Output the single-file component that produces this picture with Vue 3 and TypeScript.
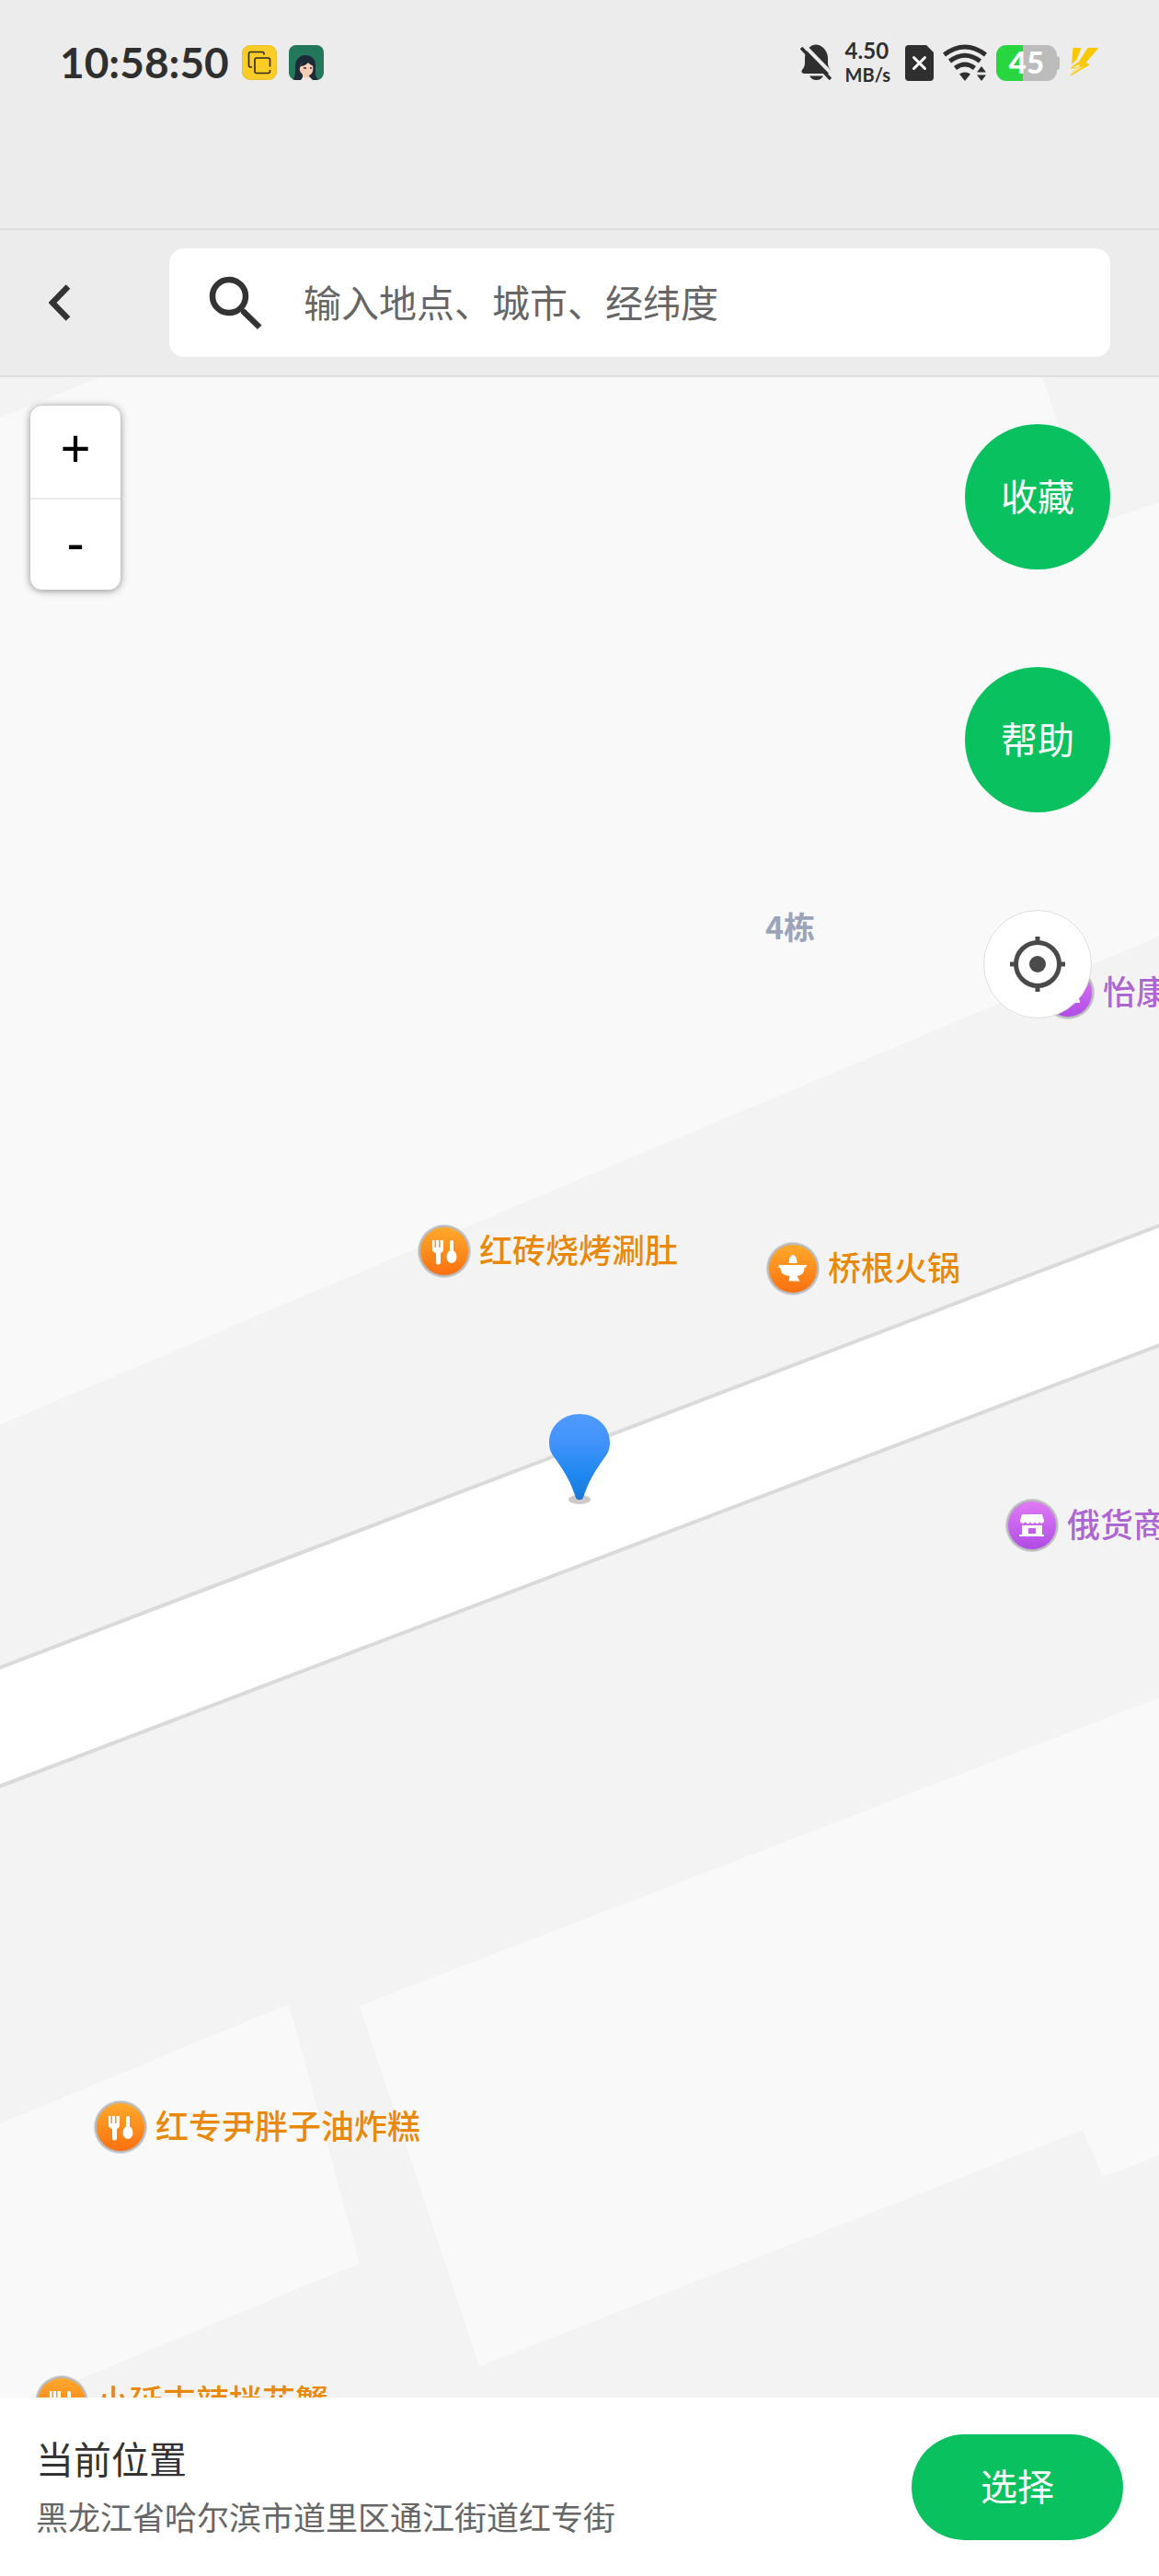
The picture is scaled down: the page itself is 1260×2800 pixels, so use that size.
<script setup lang="ts">
import { ref } from 'vue'

type PoiKind = 'food' | 'hotpot' | 'shop' | 'person'

interface Poi {
  name: string
  kind: PoiKind
  x: number
  y: number
}

// Size of the map tile area that the marker positions are measured in
const MAP_WIDTH = 1260
const MAP_HEIGHT = 2197

const pois: Poi[] = [
  { name: '怡康', kind: 'person', x: 1161, y: 669 },
  { name: '红砖烧烤涮肚', kind: 'food', x: 483, y: 950 },
  { name: '桥根火锅', kind: 'hotpot', x: 862, y: 969 },
  { name: '俄货商', kind: 'shop', x: 1122, y: 1249 },
  { name: '红专尹胖子油炸糕', kind: 'food', x: 131, y: 1903 },
  { name: '小延吉辣拌花蟹', kind: 'food', x: 67, y: 2202 },
]

const keyword = ref('')

function place(x: number, y: number) {
  return {
    left: `${(x / MAP_WIDTH) * 100}%`,
    top: `${(y / MAP_HEIGHT) * 100}%`,
  }
}

function isPurple(kind: PoiKind) {
  return kind === 'shop' || kind === 'person'
}
</script>

<template>
  <div class="screen">
    <div class="status">
      <div class="status-left">
        <span class="clock">10:58:50</span>
        <svg class="app-icon" viewBox="0 0 38 38" width="38" height="38">
          <rect x="0.5" y="0.5" width="37" height="37" rx="8" fill="#fbcb26" stroke="#e9bf3c" />
          <g fill="none" stroke="#2c2a1c" stroke-width="1.6" stroke-linecap="round">
            <path d="M24 10V9.500a2 2 0 0 0-2-2H9.500a2 2 0 0 0-2 2V22a2 2 0 0 0 2 2h1" />
            <path d="M30.500 23V16a2 2 0 0 0-2-2H16a2 2 0 0 0-2 2v12.500a2 2 0 0 0 2 2h12.500a2 2 0 0 0 2-2V27.500" />
          </g>
        </svg>
        <svg class="app-icon" viewBox="0 0 38 38" width="38" height="38">
          <defs>
            <clipPath id="avatar-clip"><rect width="38" height="38" rx="8" /></clipPath>
          </defs>
          <g clip-path="url(#avatar-clip)">
            <rect width="38" height="38" fill="#23775a" />
            <path d="M4 38c3-3 3-7 3-14C7 15 12 11 18 11c7 0 11 4 11 11 0 6-1 11 3 16z" fill="#1d2b38" />
            <path d="M12 24c0-4 3-5 6-6 3 0 7 2 8 4 1 5 0 9-4 11l-1 5h-6v-6c-2-2-4-4-3-8z" fill="#f6cdb2" />
            <path d="M11 26c1-6 5-9 10-9 4 0 6 3 6 6-3-1-5-3-6-4-3 3-6 4-8 4z" fill="#1d2b38" />
            <path d="M13 38l2-3c2 1 5 1 7-1l4 4z" fill="#f2e9e4" />
            <path d="M16 25h3M23 25h2" stroke="#3a2a28" stroke-width="1.3" />
          </g>
        </svg>
      </div>

      <div class="status-right">
        <svg viewBox="0 0 34 40" width="34" height="40">
          <path d="M6 32c-5 0-5-2-4-4 2-2 3-5 3-8v-6C6 6 11 0.500 17 0.500S29 6 30 14v6c0 3 1 6 3 8 1 2 1 4-4 4z" fill="#2f2f2f" />
          <path d="M10 34.500h15c-2 3-4 4.500-7.500 4.500S12 37.500 10 34.500z" fill="#2f2f2f" />
          <path d="M3 0l33 34" stroke="#ececec" stroke-width="4" />
          <path d="M1 4l32 34" stroke="#2f2f2f" stroke-width="3.600" />
        </svg>
        <span class="rate">
          <span class="rate-value">4.50</span>
          <span class="rate-unit">MB/s</span>
        </span>
        <svg class="sim" viewBox="0 0 31 39" width="31" height="39">
          <path d="M4 0h19l8 8v27a4 4 0 0 1-4 4H4a4 4 0 0 1-4-4V4a4 4 0 0 1 4-4z" fill="#2f2f2f" />
          <path d="M9.500 13.500l12 12M21.500 13.500l-12 12" stroke="#fff" stroke-width="3" stroke-linecap="round" />
        </svg>
        <svg class="wifi" viewBox="0 0 48 40" width="48" height="40">
          <g fill="none" stroke="#2f2f2f" stroke-width="5">
            <path d="M1.500 11.500Q24-5.500 46.500 11.500" />
            <path d="M7.500 18.500Q24 6 40.500 18.500" />
            <path d="M13.500 26Q24 18 34.500 26" />
          </g>
          <path d="M18 32.500q6-4 12 0l-6 7.500z" fill="#2f2f2f" />
          <path d="M42 24l5 6.500H37zM42 40l5-6.500H37z" fill="#2f2f2f" />
        </svg>
        <span class="battery">45</span>
        <svg class="bolt" viewBox="0 0 33 32" width="33" height="32">
          <path d="M4.500 0h9L8.500 13 3 18z" fill="#fac800" />
          <path d="M20.500 0h12L18.500 16l4 2.500L1 31l6.500-9.500L2 23l1.500-3L11 15z" fill="#fac800" />
          <path d="M3 21l10-3.500-2.500 4L16 20 2.500 29l5.500-8z" fill="#f7e49a" />
        </svg>
      </div>
    </div>

    <header class="header">
      <button class="back" type="button" aria-label="返回">
        <svg viewBox="0 0 24 40" width="24" height="40">
          <path d="M21 2.500L4 20l17 17.500" fill="none" stroke="#333" stroke-width="6.500" />
        </svg>
      </button>
      <label class="search">
        <svg viewBox="0 0 58 58" width="58" height="58">
          <circle cx="22" cy="22" r="18" fill="none" stroke="#333" stroke-width="6.500" />
          <path d="M36 37l3-1 18 17.500-4 4L35 40z" fill="#333" stroke="#333" stroke-width="1" />
        </svg>
        <input v-model="keyword" type="text" placeholder="输入地点、城市、经纬度" aria-label="搜索" />
      </label>
    </header>

    <main class="map">
      <svg class="tiles" viewBox="0 410 1260 2197" preserveAspectRatio="none">
        <g fill="#f9f9f9">
          <path d="M0 454L108 410H1133L1187 571 1260 546V1018L633 1281 0 1549z" />
          <path d="M0 2309L314 2179 391 2461 0 2623z" />
          <path d="M391 2181L1260 1846V2344L1199 2367 1177 2316 521 2573z" />
        </g>
        <path d="M-10 1817L1270 1329V1459L-10 1946z" fill="#fff" stroke="#dadada" stroke-width="4" />
      </svg>

      <span class="building" :style="place(859, 597)">4栋</span>

      <div
        v-for="poi in pois"
        :key="poi.name"
        class="poi"
        :class="{ purple: isPurple(poi.kind) }"
        :style="place(poi.x, poi.y)"
      >
        <svg viewBox="0 0 58 58" width="58" height="58">
          <defs>
            <linearGradient id="poi-orange" x1="0" y1="0" x2="0" y2="1">
              <stop offset="0" stop-color="#ffaa2b" />
              <stop offset="1" stop-color="#fb700f" />
            </linearGradient>
            <linearGradient id="poi-purple" x1="0" y1="0" x2="0" y2="1">
              <stop offset="0" stop-color="#e07af5" />
              <stop offset="1" stop-color="#b04ce6" />
            </linearGradient>
          </defs>
          <circle cx="29" cy="29" r="29" fill="#d3d4d6" />
          <circle cx="29" cy="29" r="28" fill="#b9b9bb" />
          <circle cx="29" cy="29" r="26" :fill="isPurple(poi.kind) ? 'url(#poi-purple)' : 'url(#poi-orange)'" />
          <g v-if="poi.kind === 'food'" fill="#fff">
            <path d="M16 17h2.500v8h1.500v-8h3v8h1.500v-8H28v9c0 3-1 4-3 5v10a2 2 0 0 1-5 0V31c-3-1-4-2-4-5z" />
            <rect x="35" y="17" width="4" height="14" rx="2" />
            <ellipse cx="37" cy="35" rx="5.500" ry="7" />
          </g>
          <g v-else-if="poi.kind === 'hotpot'" fill="#fff">
            <path d="M24.500 23c0-5 2-9 4.500-9s4.500 4 4.500 9z" />
            <path d="M13.500 25h31l-2 3h-1c0 6-3 8-8 9l3 5.500h-12l1-5.500c-7-1-10-3-10-9h-2z" />
          </g>
          <g v-else-if="poi.kind === 'shop'" fill="#fff">
            <path d="M18 17h22l2 7c0 3-4 4-5 1-1 3-4 3-5 0-1 3-4 3-5 0-1 3-4 3-5 0-2 3-6 2-6-1z" />
            <path d="M18 29h22v10h2v2H15v-2h3zM25 32v6h8v-6z" fill-rule="evenodd" />
          </g>
          <g v-else fill="#fff">
            <circle cx="29" cy="23" r="6" />
            <path d="M16 40c0-7 6-9 13-9s13 2 13 9z" />
          </g>
        </svg>
        <span>{{ poi.name }}</span>
      </div>

      <svg class="pin" :style="place(630, 1177)" viewBox="0 0 66 98" width="66" height="98">
        <defs>
          <linearGradient id="pin-fill" x1="0" y1="0" x2="0" y2="1">
            <stop offset="0" stop-color="#4f9aff" />
            <stop offset="0.300" stop-color="#4394fb" />
            <stop offset="0.700" stop-color="#1f88f0" />
            <stop offset="1" stop-color="#1a78d8" />
          </linearGradient>
        </defs>
        <ellipse cx="33" cy="93" rx="12" ry="5" fill="#cfc8c8" />
        <path d="M33 0C51 0 66 13 66 31c0 8-3 13-7 18-10 14-17 26-22 42-1 3-7 3-8 0-5-16-12-28-22-42-4-5-7-10-7-18C0 13 15 0 33 0z" fill="url(#pin-fill)" />
      </svg>

      <div class="zoom">
        <button type="button">+</button>
        <button type="button">-</button>
      </div>

      <div class="actions">
        <button class="round" type="button">收藏</button>
        <button class="round" type="button">帮助</button>
        <button class="locate" type="button" aria-label="定位">
          <svg viewBox="0 0 62 62" width="62" height="62">
            <circle cx="31" cy="31" r="23.500" fill="none" stroke="#4a4a4a" stroke-width="5" />
            <circle cx="31" cy="31" r="9" fill="#4a4a4a" />
            <path d="M31 1v7M31 54v7M1 31h7M54 31h7" stroke="#4a4a4a" stroke-width="5" />
          </svg>
        </button>
      </div>
    </main>

    <footer class="place">
      <div class="place-text">
        <h1>当前位置</h1>
        <p>黑龙江省哈尔滨市道里区通江街道红专街</p>
      </div>
      <button class="choose" type="button">选择</button>
    </footer>
  </div>
</template>

<style>
body {
  margin: 0;
}
</style>

<style scoped>
.screen {
  display: flex;
  flex-direction: column;
  min-height: 100vh;
  background: #ececec;
  color: #333;
  font-family: 'Noto Sans CJK SC', 'Noto Sans', sans-serif;
}

button,
input {
  padding: 0;
  border: 0;
  background: none;
  color: inherit;
  font: inherit;
}

svg {
  display: block;
  flex: none;
}

.status {
  box-sizing: border-box;
  display: flex;
  justify-content: space-between;
  align-items: flex-start;
  height: 250px;
  padding: 40px 65px 0;
  border-bottom: 2px solid #dedede;
  color: #2f2f2f;
  font-family: Lato, sans-serif;
  font-weight: 700;
}

.status-left,
.status-right {
  display: flex;
  align-items: center;
  height: 56px;
}

.clock {
  margin-right: 14px;
  font-size: 46px;
  line-height: 56px;
}

.app-icon + .app-icon {
  margin-left: 13px;
}

.rate {
  display: flex;
  flex-direction: column;
  margin-left: 15px;
}

.rate-value {
  font-size: 24px;
  line-height: 26px;
}

.rate-unit {
  font-size: 20px;
  line-height: 26px;
}

.sim {
  margin-left: 16px;
}

.wifi {
  margin-left: 10px;
}

.battery {
  position: relative;
  width: 66px;
  height: 39px;
  margin-left: 10px;
  border-radius: 11px;
  background: linear-gradient(90deg, #28d63f 44%, #bcbcbc 44%);
  color: #fff;
  font-size: 33px;
  font-weight: 900;
  line-height: 37px;
  text-align: center;
}

.battery::after {
  content: '';
  position: absolute;
  top: 12px;
  left: 66px;
  width: 3px;
  height: 15px;
  border-radius: 0 3px 3px 0;
  background: #bcbcbc;
}

.bolt {
  margin-left: 13px;
}

.header {
  display: flex;
  align-items: center;
  padding: 20px 53px 20px 0;
  border-bottom: 2px solid #e0e0e0;
}

.back {
  display: flex;
  flex: none;
  align-items: center;
  width: 184px;
  height: 118px;
  padding-left: 53px;
  box-sizing: border-box;
}

.search {
  display: flex;
  flex: 1;
  align-items: center;
  gap: 45px;
  min-width: 0;
  height: 118px;
  padding: 0 43px;
  box-sizing: border-box;
  border-radius: 16px;
  background: #fff;
}

.search input {
  flex: 1;
  min-width: 0;
  padding-bottom: 4px;
  outline: none;
  font-size: 41px;
  line-height: 60px;
}

.search input::placeholder {
  color: #666;
  opacity: 1;
}

.map {
  position: relative;
  flex: 1;
  min-height: 1000px;
  overflow: hidden;
  background: #f3f3f3;
}

.tiles {
  position: absolute;
  inset: 0;
  width: 100%;
  height: 100%;
}

.building {
  position: absolute;
  transform: translate(-50%, -50%);
  color: #9ba4b9;
  font-size: 34px;
  font-weight: 700;
  line-height: 40px;
  white-space: nowrap;
}

/* The marker's anchor is the centre of its round icon */
.poi {
  position: absolute;
  display: flex;
  align-items: center;
  gap: 9px;
  margin: -29px 0 0 -29px;
  color: #e8890c;
  font-size: 36px;
  font-weight: 500;
  line-height: 52px;
  white-space: nowrap;
  text-shadow: 0 0 3px #fff;
}

.poi.purple {
  color: #ae66d2;
}

.poi span {
  height: 58px;
}

.pin {
  position: absolute;
  transform: translate(-50%, -50%);
}

.zoom {
  position: absolute;
  top: 31px;
  left: 33px;
  display: flex;
  flex-direction: column;
  width: 98px;
  border-radius: 13px;
  background: #fff;
  box-shadow: 0 1px 8px rgba(0, 0, 0, 0.45);
}

.zoom button {
  box-sizing: border-box;
  height: 100px;
  padding-bottom: 8px;
  color: #000;
  font-family: 'Noto Sans', sans-serif;
  font-size: 58px;
  line-height: 90px;
}

.zoom button + button {
  border-top: 2px solid #ebebeb;
}

.actions {
  position: absolute;
  top: 51px;
  right: 53px;
  display: flex;
  flex-direction: column;
  align-items: center;
  gap: 106px;
}

.round {
  width: 158px;
  height: 158px;
  padding-bottom: 4px;
  border-radius: 50%;
  background: #0ac160;
  color: #fff;
  font-size: 40px;
}

.locate {
  display: flex;
  align-items: center;
  justify-content: center;
  width: 118px;
  height: 118px;
  box-sizing: border-box;
  border: 1px solid #dfdfdf;
  border-radius: 50%;
  background: #fff;
}

.place {
  display: flex;
  align-items: center;
  justify-content: space-between;
  gap: 39px;
  padding: 39px;
  background: #fff;
}

.place-text {
  display: flex;
  flex-direction: column;
  gap: 12px;
}

h1,
p {
  margin: 0;
  font-weight: 400;
}

h1 {
  font-size: 41px;
  line-height: 52px;
}

p {
  color: #666;
  font-size: 35px;
  line-height: 52px;
}

.choose {
  flex: none;
  width: 230px;
  height: 115px;
  padding-bottom: 4px;
  border-radius: 58px;
  background: #0ac160;
  color: #fff;
  font-size: 40px;
}
</style>
